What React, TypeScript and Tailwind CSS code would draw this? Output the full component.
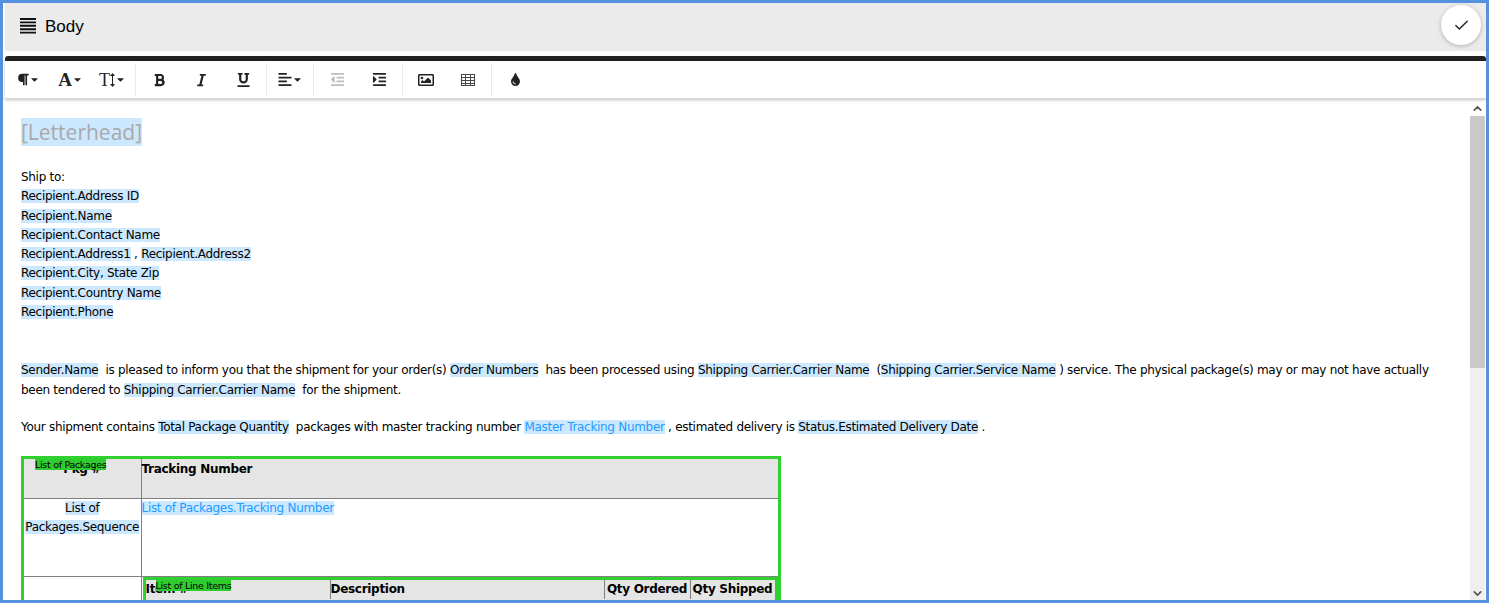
import type { ReactNode } from "react";
import {
  FaAlignLeft,
  FaBold,
  FaCaretDown,
  FaIndent,
  FaItalic,
  FaOutdent,
  FaParagraph,
  FaRegImage,
  FaTint,
  FaUnderline,
} from "react-icons/fa";
import { FiCheck, FiChevronDown, FiChevronUp } from "react-icons/fi";

function Tok({ children, blue }: { children: ReactNode; blue?: boolean }) {
  return <span className={blue ? "bg-[#cce8ff] text-[#1e9bff]" : "bg-[#cce8ff]"}>{children}</span>;
}

function ToolBtn({ children, caret, dim }: { children: ReactNode; caret?: boolean; dim?: boolean }) {
  return (
    <div className={`flex h-[30px] w-[42px] items-center justify-center ${dim ? "text-[#bdbdbd]" : "text-[#222222]"}`}>
      {children}
      {caret ? <FaCaretDown className="ml-[1px] h-[11px] w-[9px]" /> : null}
    </div>
  );
}

function Group({ children, width, last }: { children: ReactNode; width: string; last?: boolean }) {
  return (
    <div className={`flex h-[34px] items-center justify-center ${width} ${last ? "" : "box-content border-r border-[#ebebeb]"}`}>
      {children}
    </div>
  );
}

function TableIcon() {
  return (
    <svg width="14" height="12" viewBox="0 0 14 12" fill="none" stroke="#444444" strokeWidth="1">
      <rect x="0.5" y="0.5" width="13" height="11" />
      <path d="M0 3.5h14M0 6.5h14M0 9.5h14M4.5 0v12M9.5 0v12" />
    </svg>
  );
}

function Toolbar() {
  return (
    <div className="relative z-10 flex h-[38px] items-center border-b border-[#d8d8d8] bg-white shadow-[0_1px_3px_rgba(0,0,0,0.25)]">
      <Group width="w-[130px]">
        <ToolBtn caret><FaParagraph className="h-[13px] w-[12px]" /></ToolBtn>
        <ToolBtn caret><span className="font-['Liberation_Serif',serif] text-[19px] font-bold leading-none">A</span></ToolBtn>
        <ToolBtn caret>
          <span className="font-['Liberation_Serif',serif] text-[18px] leading-none">T</span>
          <svg width="5" height="14" viewBox="0 0 5 14" fill="currentColor">
            <path d="M2.5 0L5 3H3v8h2l-2.5 3L0 11h2V3H0z" />
          </svg>
        </ToolBtn>
      </Group>
      <Group width="w-[130px]">
        <ToolBtn><FaBold className="h-[14px] w-[13px]" /></ToolBtn>
        <ToolBtn><FaItalic className="h-[14px] w-[13px]" /></ToolBtn>
        <ToolBtn><FaUnderline className="h-[14px] w-[13px]" /></ToolBtn>
      </Group>
      <Group width="w-[46px]">
        <FaAlignLeft className="h-[15px] w-[14px] text-[#222222]" />
        <FaCaretDown className="ml-[1px] h-[11px] w-[9px] text-[#222222]" />
      </Group>
      <Group width="w-[88px]">
        <ToolBtn dim><FaOutdent className="h-[15px] w-[15px]" /></ToolBtn>
        <ToolBtn><FaIndent className="h-[15px] w-[15px]" /></ToolBtn>
      </Group>
      <Group width="w-[88px]">
        <ToolBtn><FaRegImage className="h-[16px] w-[16px]" /></ToolBtn>
        <ToolBtn><TableIcon /></ToolBtn>
      </Group>
      <Group width="w-[46px]" last>
        <FaTint className="h-[13px] w-[11px] text-[#222222]" />
      </Group>
    </div>
  );
}

function Scrollbar() {
  return (
    <div className="flex w-[15px] shrink-0 flex-col bg-[#efefef] text-[#555555]">
      <div className="flex h-[15px] items-center justify-center bg-white">
        <FiChevronUp className="h-[13px] w-[13px]" strokeWidth={3} />
      </div>
      <div className="h-[252px] bg-[#c9c9c9]" />
      <div className="flex-1" />
      <div className="flex h-[15px] items-center justify-center">
        <FiChevronDown className="h-[13px] w-[13px]" strokeWidth={3} />
      </div>
    </div>
  );
}

const inner = ["Item #", "Description", "Qty Ordered", "Qty Shipped"];

function PackagesTable() {
  return (
    <div className="relative mt-[19px] w-[760px] border-[3px] border-[#2fd02f]">
      <span className="absolute left-[11px] top-[0px] z-10 h-[11px] bg-[#2fcc2f] text-[9.5px] leading-[11px] tracking-[-0.3px]">List of Packages</span>
      <table className="w-full table-fixed border-collapse">
        <colgroup>
          <col className="w-[117px]" />
          <col />
        </colgroup>
        <tbody>
          <tr className="h-[39px] bg-[#e5e5e5] align-top font-bold">
            <td className="border-r border-b border-[#808080] pt-[1px] text-center">Pkg #</td>
            <td className="border-b border-[#808080] pt-[1px]">Tracking Number</td>
          </tr>
          <tr className="h-[78px] align-top">
            <td className="border-r border-b border-[#808080] text-center leading-[19px]">
              <Tok>List of</Tok> <Tok>Packages.Sequence</Tok>
            </td>
            <td className="border-b border-[#808080] leading-[19px]">
              <Tok blue>List of Packages.Tracking Number</Tok>
            </td>
          </tr>
          <tr className="align-top">
            <td className="border-r border-[#808080]" />
            <td className="pl-[1px]">
              <div className="relative w-[635px] border-[3px] border-[#2fd02f]">
                <span className="absolute left-[10px] top-[0px] z-10 h-[11px] bg-[#2fcc2f] text-[9.5px] leading-[11px] tracking-[-0.3px]">List of Line Items</span>
                <div className="grid h-[60px] grid-cols-[185px_274px_86px_1fr] bg-[#e5e5e5] font-bold">
                  {inner.map((h, i) => (
                    <div key={h} className={`h-[19px] whitespace-nowrap ${i < 3 ? "border-r border-[#808080]" : ""} ${i > 1 ? "text-center" : ""}`}>
                      {h}
                    </div>
                  ))}
                </div>
              </div>
            </td>
          </tr>
        </tbody>
      </table>
    </div>
  );
}

function Doc() {
  return (
    <div className="h-[500px] flex-1 overflow-hidden pl-[16px] pr-[32px] pt-[18px] font-['DejaVu_Sans',sans-serif] text-[12px] leading-[19.3px] tracking-[-0.3px] text-black">
      <div className="font-['Open_Sans',sans-serif] text-[21px] leading-[27px] tracking-normal text-[#a9a9a9]">
        <span className="bg-[#cce8ff]">[Letterhead]</span>
      </div>
      <div className="mt-[22px]">Ship to:</div>
      <div><Tok>Recipient.Address ID</Tok></div>
      <div><Tok>Recipient.Name</Tok></div>
      <div><Tok>Recipient.Contact Name</Tok></div>
      <div><Tok>Recipient.Address1</Tok> , <Tok>Recipient.Address2</Tok></div>
      <div><Tok>Recipient.City, State Zip</Tok></div>
      <div><Tok>Recipient.Country Name</Tok></div>
      <div><Tok>Recipient.Phone</Tok></div>
      <p className="mt-[39px]">
        <Tok>Sender.Name</Tok>&nbsp; is pleased to inform you that the shipment for your order(s) <Tok>Order Numbers</Tok>&nbsp; has been processed using <Tok>Shipping Carrier.Carrier Name</Tok>&nbsp; (<Tok>Shipping Carrier.Service Name</Tok> ) service. The physical package(s) may or may not have actually been tendered to <Tok>Shipping Carrier.Carrier Name</Tok>&nbsp; for the shipment.
      </p>
      <p className="mt-[18px]">
        Your shipment contains <Tok>Total Package Quantity</Tok>&nbsp; packages with master tracking number <Tok blue>Master Tracking Number</Tok> , estimated delivery is <Tok>Status.Estimated Delivery Date</Tok> .
      </p>
      <PackagesTable />
    </div>
  );
}

export default function App() {
  return (
    <div className="h-[603px] w-[1489px] overflow-hidden border-[3px] border-[#5591dc] bg-white pl-[2px] font-['Liberation_Sans',sans-serif]">
      <div className="flex h-[48px] items-center justify-between bg-[#ebebeb] pl-[15px] pr-[5px]">
        <div className="flex items-center gap-[9px]">
          <svg width="16" height="16" viewBox="0 0 16 16" className="mb-[3px]">
            <path d="M0 1h16M0 4.4h16M0 7.8h16M0 11.2h16M0 14.6h16" stroke="#111" strokeWidth="1.9" />
          </svg>
          <span className="text-[17px] text-black">Body</span>
        </div>
        <div className="mb-[4px] flex h-[40px] w-[40px] items-center justify-center rounded-full bg-white shadow-[0_1px_4px_rgba(0,0,0,0.25)]">
          <FiCheck className="h-[17px] w-[17px] text-[#222222]" strokeWidth={2} />
        </div>
      </div>
      <div className="mt-[5px] h-[5px] rounded-t-[3px] bg-[#222222]" />
      <Toolbar />
      <div className="mt-[2px] flex h-[500px] pr-[1px]">
        <Doc />
        <Scrollbar />
      </div>
    </div>
  );
}
